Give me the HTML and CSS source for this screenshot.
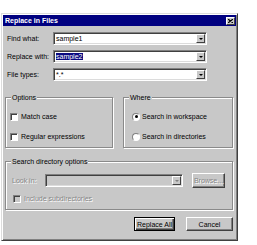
FILE: index.html
```html
<!DOCTYPE html>
<html lang="en">
<head>
  <meta charset="UTF-8" />
  <title>Replace in Files</title>
  <link rel="stylesheet" href="styles.css">
</head>
<body>
  <div class="dialog">

    <!-- title bar -->
    <div class="titlebar">
      <span class="title">Replace in Files</span>
      <span class="close-btn">
        <svg width="5" height="4" viewBox="0 0 5 4"><path d="M0 0L5 4M5 0L0 4" stroke="#000" stroke-width="1.2"/></svg>
      </span>
    </div>

    <div class="content">

      <!-- find / replace / types -->
      <div class="field-row">
        <label class="field-label">Find what:</label>
        <div class="combo"><span class="combo-text">sample1</span><span class="drop-btn"><i class="arrow"></i></span></div>
      </div>
      <div class="field-row">
        <label class="field-label">Replace with:</label>
        <div class="combo"><span class="combo-text"><span class="selected">sample2</span></span><span class="drop-btn"><i class="arrow"></i></span></div>
      </div>
      <div class="field-row">
        <label class="field-label">File types:</label>
        <div class="combo"><span class="combo-text">*.*</span><span class="drop-btn"><i class="arrow"></i></span></div>
      </div>

      <!-- options / where -->
      <div class="group-row">
        <div class="group group-options">
          <span class="group-title">Options</span>
          <div class="check-row first"><span class="checkbox"></span>Match case</div>
          <div class="check-row"><span class="checkbox"></span>Regular expressions</div>
        </div>
        <div class="group group-where">
          <span class="group-title">Where</span>
          <div class="radio-row first"><span class="radio checked"></span>Search in workspace</div>
          <div class="radio-row"><span class="radio"></span>Search in directories</div>
        </div>
      </div>

      <!-- search directory options (disabled) -->
      <div class="group group-dir">
        <span class="group-title">Search directory options</span>
        <div class="lookin-row">
          <span class="disabled-text lookin-label">Look in:</span>
          <div class="combo combo-disabled"><span class="combo-text"></span><span class="drop-btn"><i class="arrow arrow-disabled"></i></span></div>
          <span class="button button-browse disabled-text">Browse...</span>
        </div>
        <div class="check-row sub-row"><span class="checkbox checkbox-disabled"></span><span class="disabled-text">Include subdirectories</span></div>
      </div>

      <!-- buttons -->
      <div class="button-row">
        <span class="button button-default">Replace All</span>
        <span class="button button-cancel">Cancel</span>
      </div>

    </div>
  </div>
</body>
</html>
```

FILE: styles.css
```css
body {
  margin: 0;
  background: #fff;
  font-family: "Liberation Sans", Arial, sans-serif;
  font-size: 7px;
  color: #000;
}

.dialog {
  margin: 13px 0 0 1px;
  width: 237px;
  height: 228px;
  box-sizing: border-box;
  background: #c8c8c8;
  border: 1px solid;
  border-color: #dcdcdc #404040 #404040 #dcdcdc;
  box-shadow: inset 1px 1px 0 #fff, inset -1px -1px 0 #808080;
  padding: 1px;
}

.titlebar {
  height: 11px;
  background: #000080;
  display: flex;
  align-items: center;
  justify-content: space-between;
  padding: 0 1px 0 2px;
}
.title { color: #fff; font-weight: bold; line-height: 11px; }
.close-btn {
  width: 9px;
  height: 8px;
  box-sizing: border-box;
  background: #c8c8c8;
  border: 1px solid;
  border-color: #fff #404040 #404040 #fff;
  display: flex;
  align-items: center;
  justify-content: center;
}
.close-btn svg { display: block; }

.content { padding: 6px 3px 0 2px; }

.field-row {
  display: flex;
  align-items: center;
  height: 13px;
  margin-bottom: 5px;
  padding-left: 2px;
}
.field-label { width: 46px; }

.combo {
  width: 154px;
  height: 13px;
  box-sizing: border-box;
  background: #fff;
  border: 1px solid;
  border-color: #808080 #fff #fff #808080;
  box-shadow: inset 1px 1px 0 #404040, inset -1px -1px 0 #dcdcdc;
  display: flex;
  align-items: center;
  padding: 1px;
}
.combo-text { flex: 1; padding-left: 1px; line-height: 9px; }
.selected { background: #0a0a80; color: #fff; padding: 0 1px 0 0; }
.drop-btn {
  width: 9px;
  height: 9px;
  box-sizing: border-box;
  background: #c8c8c8;
  border: 1px solid;
  border-color: #fff #404040 #404040 #fff;
  display: flex;
  align-items: center;
  justify-content: center;
}
.arrow {
  width: 0;
  height: 0;
  border-left: 2px solid transparent;
  border-right: 2px solid transparent;
  border-top: 2px solid #000;
}
.arrow-disabled { border-top-color: #808080; }

.combo-disabled { width: 138px; background: #c8c8c8; }

.group-row {
  display: flex;
  gap: 10px;
  margin-top: 16px;
}
.group {
  position: relative;
  box-sizing: border-box;
  border: 1px solid #8a8a8a;
  box-shadow: 1px 1px 0 #fff, inset 1px 1px 0 #fff;
}
.group-title {
  position: absolute;
  top: -5px;
  left: 5px;
  padding: 0 1px;
  background: #c8c8c8;
  line-height: 9px;
}
.group-options { width: 108px; height: 51px; padding: 0 0 0 4px; }
.group-where { width: 110px; height: 51px; padding: 0 0 0 8px; }

.check-row, .radio-row {
  display: flex;
  align-items: center;
  height: 9px;
  margin-top: 11px;
}
.check-row.first, .radio-row.first { margin-top: 14px; }

.checkbox {
  width: 8px;
  height: 8px;
  box-sizing: border-box;
  background: #fff;
  border: 1px solid;
  border-color: #808080 #fff #fff #808080;
  box-shadow: inset 1px 1px 0 #404040;
  margin-right: 3px;
}
.checkbox-disabled { background: #c8c8c8; }

.radio {
  width: 8px;
  height: 8px;
  box-sizing: border-box;
  border-radius: 50%;
  background: #fff;
  border: 1px solid;
  border-color: #808080 #fff #fff #808080;
  margin-right: 2px;
  display: flex;
  align-items: center;
  justify-content: center;
}
.radio.checked::after {
  content: "";
  width: 3px;
  height: 3px;
  border-radius: 50%;
  background: #000;
}

.group-dir {
  width: 228px;
  height: 49px;
  margin-top: 13px;
  padding: 0 0 0 6px;
}
.lookin-row {
  display: flex;
  align-items: center;
  margin-top: 11px;
}
.lookin-label { width: 33px; }
.disabled-text { color: #868686; text-shadow: 1px 1px 0 #fff; }

.sub-row { margin-top: 6px; padding-left: 1px; }

.button {
  box-sizing: border-box;
  height: 14px;
  background: #c8c8c8;
  border: 1px solid;
  border-color: #fff #404040 #404040 #fff;
  box-shadow: inset -1px -1px 0 #808080;
  display: flex;
  align-items: center;
  justify-content: center;
}
.button-browse { width: 33px; height: 15px; margin-left: 9px; }

.button-row {
  display: flex;
  justify-content: flex-end;
  gap: 11px;
  margin-top: 7px;
}
.button-default {
  width: 41px;
  border: 1px solid #000;
  box-shadow: inset 1px 1px 0 #fff, inset -1px -1px 0 #404040, inset -2px -2px 0 #808080;
}
.button-cancel { width: 47px; }
```
